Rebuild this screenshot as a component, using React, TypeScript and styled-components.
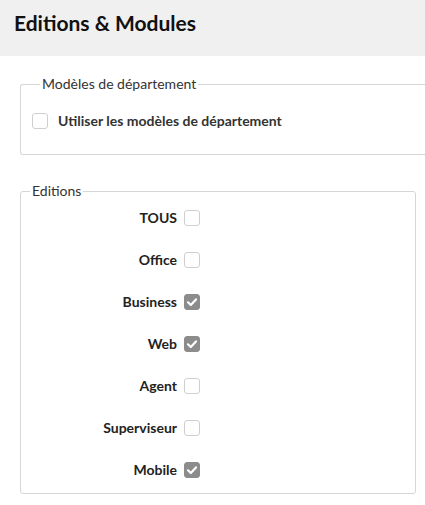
import React, {useState} from "react";
import styled, {createGlobalStyle} from "styled-components";

const GlobalStyle = createGlobalStyle`
    html, body {
        margin: 0;
        padding: 0;
        background: white;
        overflow: hidden;
    }
    body {
        font-family: Lato, "Open Sans", sans-serif;
        color: #222;
    }
`;

const Header = styled.header`
    height: 56px;
    box-sizing: border-box;
    padding: 10px 14px 0;
    background: #f0f0f0;
`;

const Title = styled.h1`
    margin: 0;
    font-size: 21px;
    line-height: 25px;
    font-weight: 700;
    color: #111;
`;

const Content = styled.div`
    padding: 20px 9px 0 20px;
`;

// $open: the panel runs on to the right edge of the page, without a right border
const Fieldset = styled.fieldset<{ $open?: boolean, $padBottom: number }>`
    margin: 0 ${props => props.$open ? '-9px' : '0'} 28px 0;
    padding: 0 11px ${props => props.$padBottom}px;
    border: 1px solid #d6d6d6;
    border-right: ${props => props.$open ? 'none' : '1px solid #d6d6d6'};
    border-radius: ${props => props.$open ? '3px 0 0 3px' : '3px'};
    min-width: 0;
    box-sizing: border-box;
`;

const Legend = styled.legend<{ $indent: number }>`
    margin-left: ${props => props.$indent}px;
    padding: 0 2px;
    font-size: 14px;
    line-height: 16px;
    color: #333;
`;

const Box = styled.span<{ checked: boolean }>`
    display: inline-flex;
    align-items: center;
    justify-content: center;
    width: 16px;
    height: 16px;
    box-sizing: border-box;
    border: 1px solid ${props => props.checked ? '#8c8c8c' : '#cfcfcf'};
    border-radius: 3px;
    background: ${props => props.checked ? '#8c8c8c' : 'white'};
    flex-shrink: 0;
    cursor: pointer;
`;

const CheckRow = styled.label`
    display: flex;
    align-items: center;
    gap: 10px;
    margin-top: 21px;
    font-size: 14px;
    line-height: 16px;
    font-weight: 700;
    color: #333;
`;

const EditionGrid = styled.div`
    display: grid;
    grid-template-columns: 145px 16px;
    column-gap: 7px;
    row-gap: 26px;
    align-items: center;
    margin-top: 11px;
`;

const EditionLabel = styled.span`
    text-align: right;
    font-size: 14px;
    line-height: 16px;
    font-weight: 700;
    color: #222;
`;

function Checkbox({checked, onToggle}: { checked: boolean, onToggle: () => void }) {
    return <Box checked={checked} onClick={onToggle}>
        {checked && <svg width="12" height="12" viewBox="0 0 12 12">
            <path d="M2 6.3 L4.8 9 L10 3.4" fill="none" stroke="white" strokeWidth="2.2"
                  strokeLinecap="round" strokeLinejoin="round"/>
        </svg>}
    </Box>;
}

const initialEditions = [
    {name: 'TOUS', checked: false},
    {name: 'Office', checked: false},
    {name: 'Business', checked: true},
    {name: 'Web', checked: true},
    {name: 'Agent', checked: false},
    {name: 'Superviseur', checked: false},
    {name: 'Mobile', checked: true},
];

export default function App() {
    const [useTemplates, setUseTemplates] = useState(false);
    const [editions, setEditions] = useState(initialEditions);

    const toggle = (idx: number) =>
        setEditions(list => list.map((e, i) => i === idx ? {...e, checked: !e.checked} : e));

    return <>
        <GlobalStyle/>
        <Header>
            <Title>Editions &amp; Modules</Title>
        </Header>
        <Content>
            <Fieldset $open $padBottom={25}>
                <Legend $indent={8}>Modèles de département</Legend>
                <CheckRow>
                    <Checkbox checked={useTemplates} onToggle={() => setUseTemplates(v => !v)}/>
                    Utiliser les modèles de département
                </CheckRow>
            </Fieldset>
            <Fieldset $padBottom={15}>
                <Legend $indent={-2}>Editions</Legend>
                <EditionGrid>
                    {editions.map((e, idx) => <React.Fragment key={e.name}>
                        <EditionLabel>{e.name}</EditionLabel>
                        <Checkbox checked={e.checked} onToggle={() => toggle(idx)}/>
                    </React.Fragment>)}
                </EditionGrid>
            </Fieldset>
        </Content>
    </>;
}
